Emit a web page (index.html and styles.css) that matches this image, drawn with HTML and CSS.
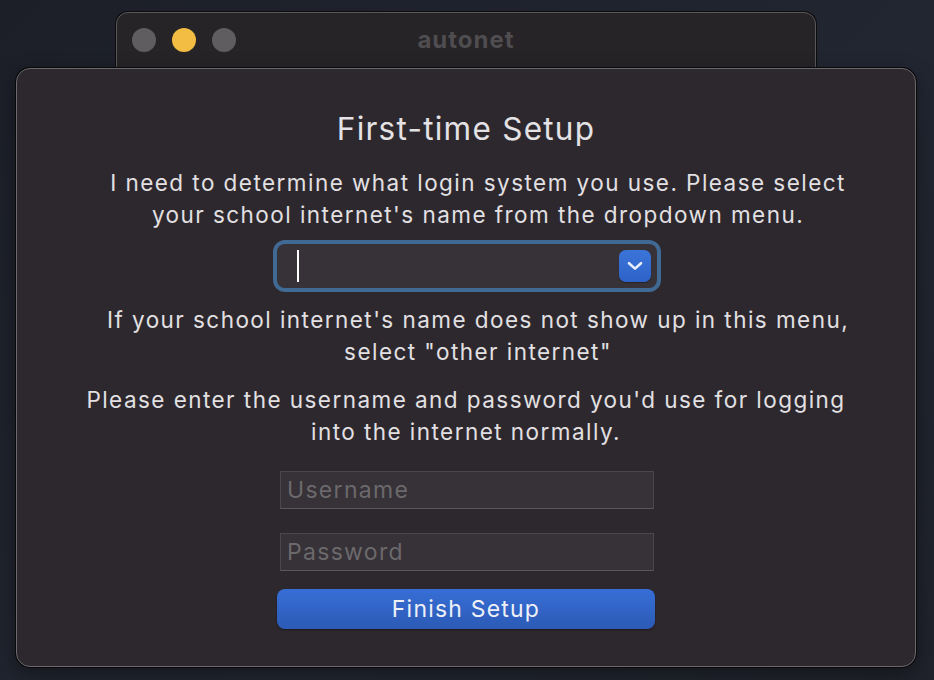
FILE: index.html
```html
<!DOCTYPE html>
<html>
<head>
<meta charset="utf-8">
<link rel="stylesheet" href="styles.css">
</head>
<body>
<div class="desktop">
  <div class="window">
    <div class="titlebar">
      <div class="lights">
        <span class="light gray"></span>
        <span class="light yellow"></span>
        <span class="light gray"></span>
      </div>
      <div class="wtitle">autonet</div>
    </div>
  </div>
  <div class="sheet">
    <h1 class="title">First-time Setup</h1>
    <p class="para p1">I need to determine what login system you use. Please select<br>your school internet's name from the dropdown menu.</p>
    <div class="combo">
      <div class="combo-field">
        <span class="caret"></span>
        <span class="combo-btn">
          <svg width="18" height="12" viewBox="0 0 18 12"><path d="M3 3.2 L9 8.6 L15 3.2" fill="none" stroke="#e8eefa" stroke-width="2.6" stroke-linecap="round" stroke-linejoin="round"/></svg>
        </span>
      </div>
    </div>
    <p class="para p2">If your school internet's name does not show up in this menu,<br>select "other internet"</p>
    <p class="para p3">Please enter the username and password you'd use for logging<br>into the internet normally.</p>
    <div class="field f1"><span class="ph">Username</span></div>
    <div class="field f2"><span class="ph">Password</span></div>
    <button class="finish">Finish Setup</button>
  </div>
</div>
</body>
</html>
```
FILE: styles.css
```css
html, body {
  margin: 0;
  padding: 0;
  width: 934px;
  height: 680px;
  overflow: hidden;
}
body {
  background: linear-gradient(135deg, #1c1f28 0%, #222631 60%, #1f222b 100%);
  font-family: Inter, "Noto Sans", sans-serif;
}
.desktop {
  position: relative;
  width: 934px;
  height: 680px;
}
.window {
  position: absolute;
  left: 116px;
  top: 12px;
  width: 698px;
  height: 120px;
  background: #262426;
  border: 1px solid #5a585b;
  border-radius: 12px;
  box-shadow: 0 0 0 1px #0c0c0e;
}
.titlebar {
  height: 54px;
  display: flex;
  align-items: center;
  position: relative;
}
.lights {
  display: flex;
  gap: 16px;
  padding-left: 15px;
}
.light {
  width: 24px;
  height: 24px;
  border-radius: 50%;
  display: block;
}
.light.gray { background: #5f5d60; }
.light.yellow { background: #f2bd42; }
.wtitle {
  position: absolute;
  left: 0;
  right: 0;
  top: 12px;
  text-align: center;
  color: #4f4d50;
  font-weight: 700;
  font-size: 24px;
  letter-spacing: 1px;
}
.sheet {
  position: absolute;
  left: 16px;
  top: 68px;
  width: 898px;
  height: 597px;
  background: #2d282e;
  border: 1px solid #6a686b;
  border-radius: 14px;
  box-shadow: 0 0 0 1px #0a0a0c, 0 6px 20px rgba(0,0,0,0.4);
  display: flex;
  flex-direction: column;
  align-items: center;
}
.title {
  margin: 41px 0 0 0;
  font-size: 31.5px;
  font-weight: 400;
  color: #e4e2e4;
  line-height: 38px;
  letter-spacing: 1.25px;
}
.para {
  margin: 0;
  font-size: 22.5px;
  line-height: 32px;
  color: #e2e0e2;
  text-align: center;
  letter-spacing: 1.45px;
}
.p1 { margin-top: 19px; margin-left: 24px; }
.combo {
  margin-top: 9px;
  margin-left: 2px;
  width: 380px;
  height: 44px;
  border: 4px solid #406994;
  border-radius: 12px;
  background: #3a6590;
  padding: 0;
}
.combo-field {
  height: 100%;
  background: #363238;
  border-radius: 8px;
  display: flex;
  align-items: center;
  justify-content: space-between;
  padding: 0 6px 0 20px;
  box-sizing: border-box;
}
.caret {
  width: 2px;
  height: 32px;
  background: #ffffff;
}
.combo-btn {
  width: 32px;
  height: 32px;
  border-radius: 7px;
  background: linear-gradient(#3b74d8, #2d63c9);
  display: flex;
  align-items: center;
  justify-content: center;
  box-shadow: 0 1px 1px rgba(0,0,0,0.3);
}
.p2 { margin-top: 12px; margin-left: 24px; }
.p3 { margin-top: 16px; }
.field {
  width: 366px;
  height: 36px;
  background: #363238;
  border: 1px solid #4a4649;
  border-bottom-color: #5a575a;
  display: flex;
  align-items: center;
  padding-left: 6px;
  margin-left: 2px;
}
.f1 { margin-top: 23px; }
.f2 { margin-top: 24px; }
.ph {
  color: #6c696c;
  font-size: 23px;
  letter-spacing: 1.3px;
}
.finish {
  margin-top: 18px;
  width: 378px;
  height: 40px;
  border: none;
  border-radius: 8px;
  background: linear-gradient(#376ed6, #2c5ab6);
  color: #eef0f8;
  font-family: Inter, "Noto Sans", sans-serif;
  font-size: 23px;
  letter-spacing: 1.2px;
  box-shadow: 0 1px 2px rgba(0,0,0,0.4);
  padding: 0;
}
```
